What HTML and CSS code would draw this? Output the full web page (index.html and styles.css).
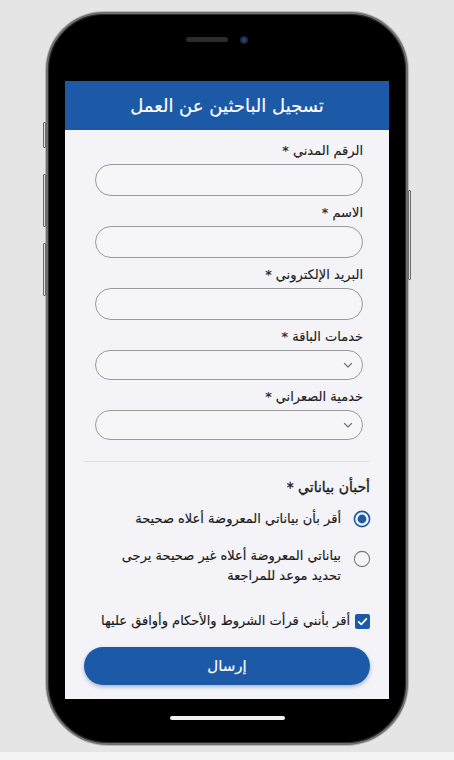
FILE: index.html
```html
<!DOCTYPE html>
<html lang="ar" dir="rtl">
<head>
<meta charset="utf-8">
<title>تسجيل الباحثين عن العمل</title>
<link rel="stylesheet" href="styles.css">
</head>
<body>
<div class="stage">
  <div class="phone">
    <span class="side-btn mute"></span>
    <span class="side-btn vol-up"></span>
    <span class="side-btn vol-down"></span>
    <span class="side-btn power"></span>
    <div class="top-bezel">
      <span class="speaker"></span>
      <span class="camera"></span>
    </div>
    <div class="screen">
      <header class="app-header">تسجيل الباحثين عن العمل</header>
      <form class="form">
        <div class="fields">
          <label class="label">الرقم المدني *</label>
          <div class="input"></div>
          <label class="label">الاسم *</label>
          <div class="input"></div>
          <label class="label">البريد الإلكتروني *</label>
          <div class="input"></div>
          <label class="label">خدمات الباقة *</label>
          <div class="input select">
            <svg width="10" height="7" viewBox="0 0 10 7"><path d="M1.5 1.5 L5 5 L8.5 1.5" fill="none" stroke="#777" stroke-width="1.3" stroke-linecap="round" stroke-linejoin="round"/></svg>
          </div>
          <label class="label">خدمية الصعراني *</label>
          <div class="input select">
            <svg width="10" height="7" viewBox="0 0 10 7"><path d="M1.5 1.5 L5 5 L8.5 1.5" fill="none" stroke="#777" stroke-width="1.3" stroke-linecap="round" stroke-linejoin="round"/></svg>
          </div>
        </div>
        <hr class="divider">
        <div class="heading">أحبأن بياناتي *</div>
        <div class="radio-row first">
          <svg class="radio" width="18" height="18" viewBox="0 0 18 18"><circle cx="9" cy="9" r="7.6" fill="none" stroke="#1c5aa8" stroke-width="1.6"/><circle cx="9" cy="9" r="4.4" fill="#1c5aa8"/></svg>
          <span class="radio-text">أقر بأن بياناتي المعروضة أعلاه صحيحة</span>
        </div>
        <div class="radio-row second">
          <svg class="radio" width="18" height="18" viewBox="0 0 18 18"><circle cx="9" cy="9" r="7.6" fill="none" stroke="#7a7a7a" stroke-width="1.1"/></svg>
          <span class="radio-text">بياناتي المعروضة أعلاه غير صحيحة يرجى<br>تحديد موعد للمراجعة</span>
        </div>
        <div class="check-row">
          <svg class="check" width="15" height="15" viewBox="0 0 15 15"><rect x="0" y="0" width="15" height="15" rx="2" fill="#1c5aa8"/><path d="M3.6 7.8 L6.3 10.3 L11.4 4.8" fill="none" stroke="#fff" stroke-width="1.7" stroke-linecap="round" stroke-linejoin="round"/></svg>
          <span class="check-text">أقر بأنني قرأت الشروط والأحكام وأوافق عليها</span>
        </div>
        <button type="button" class="submit">إرسال</button>
      </form>
    </div>
    <div class="bottom-bezel">
      <span class="home-bar"></span>
    </div>
  </div>
  <div class="floor"></div>
</div>
</body>
</html>
```

FILE: styles.css
```css
* { box-sizing: border-box; }
html, body { margin: 0; padding: 0; }
body {
  background: #e5e5e5;
  font-family: "DejaVu Sans", sans-serif;
  color: #222;
}
.stage {
  width: 454px;
  height: 760px;
  display: flex;
  flex-direction: column;
  align-items: flex-start;
  overflow: hidden;
}
.phone {
  position: relative;
  margin: 12px 46px 0 0;
  width: 362px;
  height: 733px;
  background: #000;
  border: 2px solid #6f6f6f;
  box-shadow: 0 0 0 1px #b9b9b9, inset 0 0 0 1px #2b2b2b;
  border-radius: 58px 58px 62px 62px;
  padding: 0 17px;
  display: flex;
  flex-direction: column;
}
.side-btn {
  position: absolute;
  width: 3px;
  background: #e0e0e0;
  border: 1px solid #6a6a6a;
  border-radius: 1px;
}
.mute { left: -5px; top: 108px; height: 26px; }
.vol-up { left: -5px; top: 160px; height: 53px; }
.vol-down { left: -5px; top: 229px; height: 53px; }
.power { right: -5px; top: 176px; height: 90px; }
.top-bezel {
  height: 67px;
  display: flex;
  justify-content: center;
  align-items: flex-start;
  padding-top: 23px;
  padding-right: 20px;
  gap: 12px;
  direction: ltr;
}
.speaker {
  width: 42px;
  height: 5px;
  border-radius: 3px;
  background: #2c2c2c;
}
.camera {
  width: 8px;
  height: 8px;
  margin-top: -1px;
  border-radius: 50%;
  background: radial-gradient(circle at 50% 50%, #3b4c78 0, #1b2440 60%, #10141f 100%);
}
.screen {
  height: 618px;
  background: #f4f4f8;
  display: flex;
  flex-direction: column;
}
.app-header {
  height: 49px;
  background: #1c5aa8;
  color: #fff;
  font-size: 18px;
  -webkit-text-stroke: 0.15px #fff;
  display: flex;
  align-items: center;
  justify-content: center;
}
.form {
  display: flex;
  flex-direction: column;
  padding: 10px 19px 0 19px;
  -webkit-text-stroke: 0.15px #1a1a1a;
}
.fields {
  display: flex;
  flex-direction: column;
  padding: 0 7px 0 11px;
}
.label {
  font-size: 13px;
  line-height: 22px;
  height: 22px;
  margin-bottom: 2px;
  color: #222;
}
.input {
  height: 32px;
  border: 1px solid #9a9a9a;
  border-radius: 16px;
  background: #f6f6f9;
  margin-bottom: 6px;
}
.input.select {
  height: 30px;
  display: flex;
  align-items: center;
  padding-right: 9px;
}
.divider {
  margin: 15px 0 0 0;
  border: 0;
  border-top: 1px solid #dedede;
  width: 100%;
}
.heading {
  margin-top: 13px;
  font-size: 14px;
  line-height: 24px;
  color: #1a1a1a;
  -webkit-text-stroke: 0.35px #1a1a1a;
}
.radio-row {
  display: flex;
  align-items: center;
  gap: 12px;
  font-size: 13px;
  line-height: 20px;
  color: #1a1a1a;
}
.radio-row.first { margin-top: 8px; height: 24px; }
.radio-row.second { margin-top: 15px; align-items: flex-start; }
.radio-row.second .radio { margin-top: 4px; }
.radio { flex: none; margin-right: -1px; }
.check-row {
  margin-top: 25px;
  display: flex;
  align-items: center;
  gap: 5px;
  font-size: 13px;
  line-height: 20px;
  color: #1a1a1a;
}
.check { flex: none; }
.submit {
  margin-top: 16px;
  height: 38px;
  width: 100%;
  border: 0;
  border-radius: 19px;
  background: #1c5aa8;
  color: #fff;
  font-family: inherit;
  font-size: 15px;
  -webkit-text-stroke: 0.15px #fff;
  box-shadow: 0 2px 4px rgba(20, 60, 120, 0.35);
}
.bottom-bezel {
  flex: 1;
  display: flex;
  justify-content: center;
  align-items: flex-start;
  padding-top: 17px;
}
.home-bar {
  width: 115px;
  height: 4px;
  border-radius: 2px;
  background: #f2f2f2;
}
.floor {
  margin-top: 7px;
  width: 454px;
  flex: 1;
  background: #f3f3f3;
}
```
